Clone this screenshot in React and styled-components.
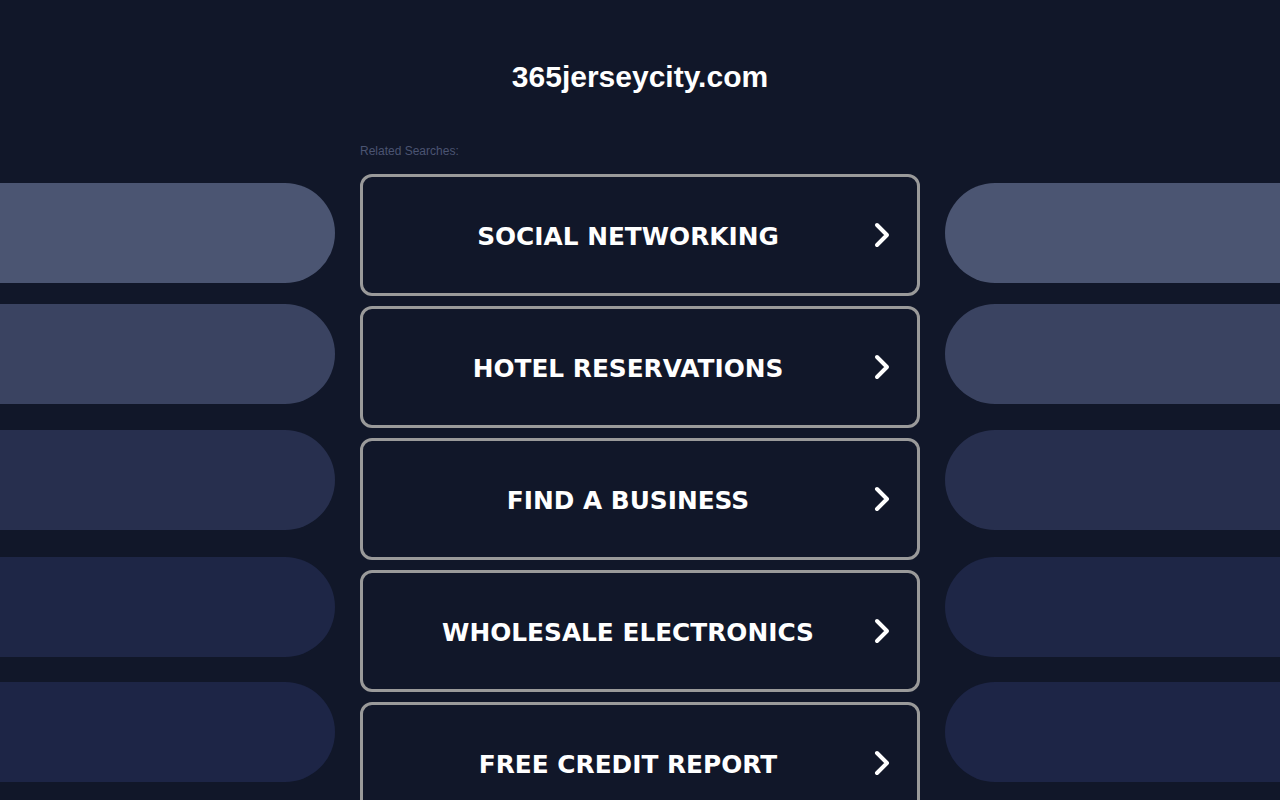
import styled, { createGlobalStyle } from "styled-components";

const GlobalStyle = createGlobalStyle`
  html, body {
    margin: 0;
    padding: 0;
    background-color: #111729;
  }
  body {
    font-family: "Liberation Sans", Arial, sans-serif;
    overflow: hidden;
  }
`;

const PageRoot = styled.div`
  width: 1280px;
  height: 800px;
  overflow: hidden;
  background-color: #111729;
  display: flex;
  flex-direction: column;
`;

const Header = styled.header`
  padding-top: 59px;
  height: 86px;
  box-sizing: border-box;
  display: flex;
  justify-content: center;
`;

const Domain = styled.h1`
  margin: 0;
  font-family: "Liberation Sans", Arial, sans-serif;
  font-size: 30px;
  line-height: 36px;
  font-weight: 700;
  color: #ffffff;
`;

const Main = styled.main`
  margin-top: 58px;
  display: flex;
  flex-direction: row;
  gap: 25px;
`;

const Side = styled.div`
  flex: 1;
  min-width: 0;
  padding-top: 39px;
  display: flex;
  flex-direction: column;
`;

const Pill = styled.div`
  height: 100px;
  width: 100%;
  flex-shrink: 0;
  margin-top: ${(p) => p.$space}px;
  background-color: ${(p) => p.$tone};
  border-radius: ${(p) => (p.$right ? "50px 0 0 50px" : "0 50px 50px 0")};
`;

const Center = styled.section`
  width: 560px;
  flex-shrink: 0;
  display: flex;
  flex-direction: column;
`;

const Label = styled.div`
  font-family: "Liberation Sans", Arial, sans-serif;
  font-size: 12px;
  line-height: 14px;
  color: #4b5472;
  margin-bottom: 16px;
`;

const Links = styled.div`
  display: flex;
  flex-direction: column;
  gap: 10px;
`;

const LinkButton = styled.a`
  height: 122px;
  box-sizing: border-box;
  border: 3px solid #9a9a9a;
  border-radius: 12px;
  display: flex;
  flex-direction: row;
  align-items: center;
  justify-content: center;
  position: relative;
  padding: 3px 24px 0 0;
  text-decoration: none;
  cursor: pointer;
  flex-shrink: 0;
`;

const LinkText = styled.span`
  font-family: "DejaVu Sans", Tahoma, sans-serif;
  font-weight: 700;
  font-size: 24.8px;
  color: #ffffff;
`;

const Chevron = styled.svg`
  position: absolute;
  right: 26px;
  top: 50%;
  transform: translateY(-50%);
  width: 18px;
  height: 28px;
`;

const pills = [
  { tone: "#4b5572", space: 0 },
  { tone: "#3a4361", space: 21 },
  { tone: "#272f4e", space: 26 },
  { tone: "#1e2646", space: 27 },
  { tone: "#1d2546", space: 25 },
];

const searches = [
  "SOCIAL NETWORKING",
  "HOTEL RESERVATIONS",
  "FIND A BUSINESS",
  "WHOLESALE ELECTRONICS",
  "FREE CREDIT REPORT",
];

const ArrowIcon = () => (
  <Chevron viewBox="0 0 18 28" fill="none">
    <path
      d="M4 4 L14 14 L4 24"
      stroke="#ffffff"
      strokeWidth="4"
      strokeLinecap="round"
      strokeLinejoin="round"
    />
  </Chevron>
);

const App = () => {
  return (
    <PageRoot>
      <GlobalStyle />
      <Header>
        <Domain>365jerseycity.com</Domain>
      </Header>
      <Main>
        <Side>
          {pills.map((p) => (
            <Pill key={p.tone} $tone={p.tone} $space={p.space} />
          ))}
        </Side>
        <Center>
          <Label>Related Searches:</Label>
          <Links>
            {searches.map((s) => (
              <LinkButton key={s}>
                <LinkText>{s}</LinkText>
                <ArrowIcon />
              </LinkButton>
            ))}
          </Links>
        </Center>
        <Side>
          {pills.map((p) => (
            <Pill key={p.tone} $tone={p.tone} $space={p.space} $right />
          ))}
        </Side>
      </Main>
    </PageRoot>
  );
};

export default App;
